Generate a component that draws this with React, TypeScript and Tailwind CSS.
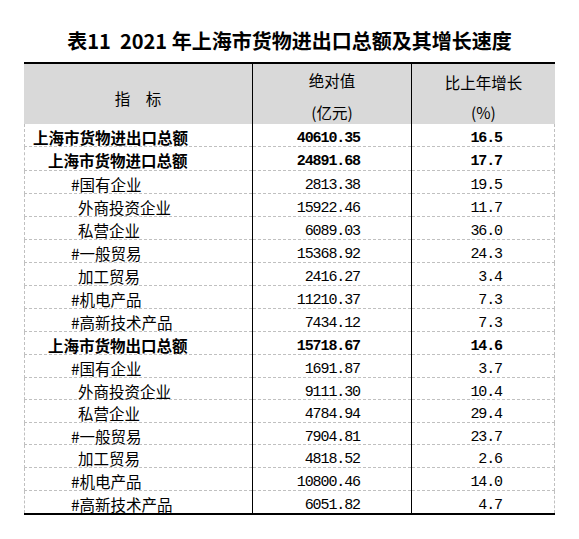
import React from "react";

type Row = {
  label: string;
  v: string;
  g: string;
  bold?: boolean;
  pl: string;
  h: string;
};

const rows: Row[] = [
  { label: "上海市货物进出口总额", v: "40610.35", g: "16.5", bold: true, pl: "pl-[8px]", h: "h-[23px]" },
  { label: "上海市货物进口总额", v: "24891.68", g: "17.7", bold: true, pl: "pl-[23px]", h: "h-[24px]" },
  { label: "#国有企业", v: "2813.38", g: "19.5", pl: "pl-[46px]", h: "h-[23px]" },
  { label: "外商投资企业", v: "15922.46", g: "11.7", pl: "pl-[53px]", h: "h-[23px]" },
  { label: "私营企业", v: "6089.03", g: "36.0", pl: "pl-[53px]", h: "h-[23px]" },
  { label: "#一般贸易", v: "15368.92", g: "24.3", pl: "pl-[46px]", h: "h-[23px]" },
  { label: "加工贸易", v: "2416.27", g: "3.4", pl: "pl-[53px]", h: "h-[23px]" },
  { label: "#机电产品", v: "11210.37", g: "7.3", pl: "pl-[46px]", h: "h-[23px]" },
  { label: "#高新技术产品", v: "7434.12", g: "7.3", pl: "pl-[46px]", h: "h-[23px]" },
  { label: "上海市货物出口总额", v: "15718.67", g: "14.6", bold: true, pl: "pl-[23px]", h: "h-[23px]" },
  { label: "#国有企业", v: "1691.87", g: "3.7", pl: "pl-[46px]", h: "h-[23px]" },
  { label: "外商投资企业", v: "9111.30", g: "10.4", pl: "pl-[53px]", h: "h-[22px]" },
  { label: "私营企业", v: "4784.94", g: "29.4", pl: "pl-[53px]", h: "h-[23px]" },
  { label: "#一般贸易", v: "7904.81", g: "23.7", pl: "pl-[46px]", h: "h-[22px]" },
  { label: "加工贸易", v: "4818.52", g: "2.6", pl: "pl-[53px]", h: "h-[23px]" },
  { label: "#机电产品", v: "10800.46", g: "14.0", pl: "pl-[46px]", h: "h-[23px]" },
  { label: "#高新技术产品", v: "6051.82", g: "4.7", pl: "pl-[46px]", h: "h-[22px]" },
];

const cjk = "font-['Noto_Sans_CJK_SC',sans-serif]";
const mono = "font-['Liberation_Mono',monospace]";

export default function App() {
  return (
    <div className={`w-[579px] h-[539px] bg-white text-black ${cjk}`}>
      <div className="pt-[31px] pb-[11px] text-center text-[20px] leading-[20px] font-bold whitespace-pre">
        表11  2021 年上海市货物进出口总额及其增长速度
      </div>
      <div className="ml-[24px] w-[531px] border-t-2 border-b-2 border-black">
        <div className="grid grid-cols-[228px_1px_158px_1px_143px]">
          <div className="[grid-column:2] [grid-row:1/19] bg-black" />
          <div className="[grid-column:4] [grid-row:1/19] bg-black" />

          {/* header */}
          <div className="h-[60px] bg-[#d9d9d9] pt-[26px] text-center text-[15.5px] leading-[16px]">
            指　标
          </div>
          <div className="h-[60px] bg-[#d9d9d9] pt-[8px] flex flex-col items-center gap-[16px] text-[15.5px] leading-[16px]">
            <span>绝对值</span>
            <span>(亿元)</span>
          </div>
          <div className="h-[60px] bg-[#d9d9d9] pt-[10px] flex flex-col items-center gap-[14px] text-[15.5px] leading-[16px]">
            <span>比上年增长</span>
            <span>(%)</span>
          </div>

          {rows.map((r, i) => {
            const last = i === rows.length - 1;
            const bb = last ? "" : "border-b";
            const b = r.bold ? "font-bold" : "font-normal";
            return (
              <React.Fragment key={i}>
                <div
                  className={`${r.h} ${bb} border-l border-dashed border-[#c0c0c0] ${r.pl} pt-[5px] text-[15.5px] leading-[16px] whitespace-nowrap ${b}`}
                >
                  {r.label}
                </div>
                <div
                  className={`${r.h} ${bb} border-dashed border-[#c0c0c0] pr-[51px] pt-[7px] text-right text-[15px] tracking-[-1.1px] leading-[16px] ${mono} ${b}`}
                >
                  {r.v}
                </div>
                <div
                  className={`${r.h} ${bb} border-r border-dashed border-[#c0c0c0] pr-[52px] pt-[7px] text-right text-[15px] tracking-[-1.1px] leading-[16px] ${mono} ${b}`}
                >
                  {r.g}
                </div>
              </React.Fragment>
            );
          })}
        </div>
      </div>
    </div>
  );
}
